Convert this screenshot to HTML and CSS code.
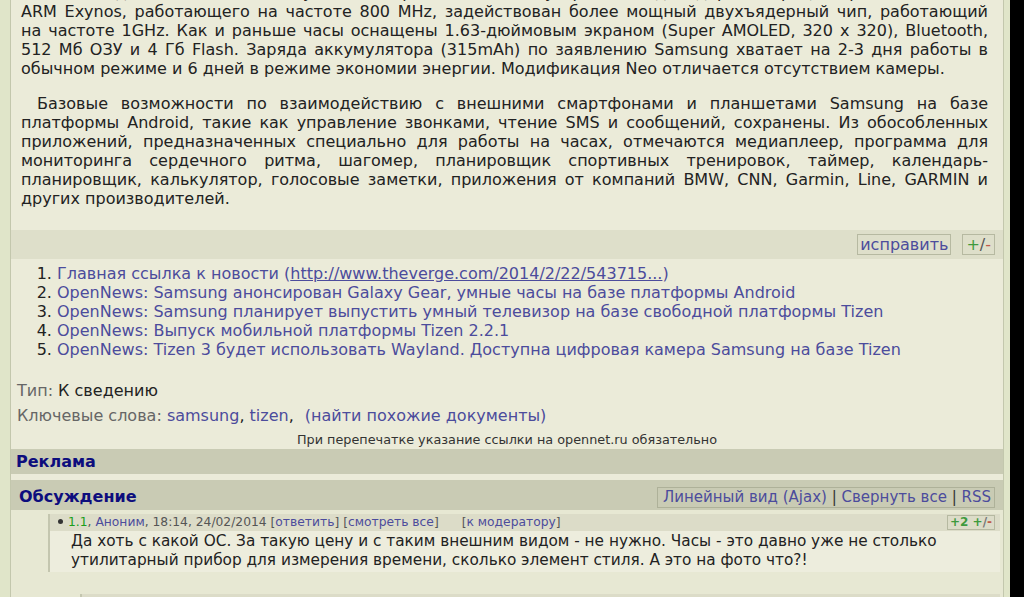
FILE: index.html
```html
<!DOCTYPE html>
<html lang="ru">
<head>
<meta charset="utf-8">
<title>OpenNews: Samsung Gear 2</title>
<link rel="stylesheet" href="styles.css">
</head>
<body>
<div class="page">
  <div class="article">
    <p>В новых моделях вместо используемого в первом поколении устройства одноядерного процессора<br>ARM Exynos, работающего на частоте 800 MHz, задействован более мощный двухъядерный чип, работающий на&nbsp;частоте 1GHz. Как и раньше часы оснащены 1.63-дюймовым экраном (Super AMOLED, 320 x 320), Bluetooth, 512&nbsp;Мб ОЗУ и 4 Гб Flash. Заряда аккумулятора (315mAh) по заявлению Samsung хватает на 2-3 дня работы в обычном режиме и 6 дней в режиме экономии энергии. Модификация Neo отличается отсутствием камеры.</p>
    <p class="p2">Базовые возможности по взаимодействию с внешними смартфонами и планшетами Samsung на базе платформы Android, такие как управление звонками, чтение SMS и сообщений, сохранены. Из обособленных приложений, предназначенных специально для работы на часах, отмечаются медиаплеер, программа для мониторинга сердечного ритма, шагомер, планировщик спортивных тренировок, таймер, календарь-планировщик, калькулятор, голосовые заметки, приложения от компаний BMW, CNN, Garmin, Line, GARMIN и других производителей.</p>
  </div>

  <div class="edit-bar">
    <a class="btn" href="#">исправить</a>
    <a class="btn btn-pm" href="#"><span class="plus">+</span>/<span class="minus">-</span></a>
  </div>

  <ol class="links">
    <li><a href="#">Главная ссылка к новости (<span class="u">http://www.theverge.com/2014/2/22/543715...</span>)</a></li>
    <li><a href="#">OpenNews: Samsung анонсирован Galaxy Gear, умные часы на базе платформы Android</a></li>
    <li><a href="#">OpenNews: Samsung планирует выпустить умный телевизор на базе свободной платформы Tizen</a></li>
    <li><a href="#">OpenNews: Выпуск мобильной платформы Tizen 2.2.1</a></li>
    <li><a href="#">OpenNews: Tizen 3 будет использовать Wayland.</a> <a href="#">Доступна цифровая камера Samsung на базе Tizen</a></li>
  </ol>

  <div class="meta type"><span class="label">Тип:</span> К сведению</div>
  <div class="meta kw"><span class="label">Ключевые слова:</span> <a href="#">samsung</a>, <a href="#">tizen</a>, <a class="similar" href="#">(найти похожие документы)</a></div>
  <div class="reprint">При перепечатке указание ссылки на opennet.ru обязательно</div>

  <div class="ad-bar">Реклама</div>

  <div class="disc-bar">
    <span class="disc-title">Обсуждение</span>
    <span class="view-box"><a href="#">Линейный вид (Ajax)</a> | <a href="#">Свернуть все</a> | <a href="#">RSS</a></span>
  </div>

  <div class="comments">
    <div class="comment">
      <div class="c-head">
        <span class="c-meta"><span class="bullet"></span><span class="num">1.1</span>, <a href="#">Аноним</a>, 18:14, 24/02/2014 [<a href="#">ответить</a>] [<a href="#">смотреть все</a>] <span class="mod">[<a href="#">к модератору</a>]</span></span>
        <span class="vote"><span class="plus">+2</span> <span class="plus">+</span>/<span class="minus">-</span></span>
      </div>
      <div class="c-body">Да хоть с какой ОС. За такую цену и с таким внешним видом - не нужно. Часы - это давно уже не столько утилитарный прибор для измерения времени, сколько элемент стиля. А это на фото что?!</div>
    </div>
    <div class="comment nested">
      <div class="c-head"></div>
    </div>
  </div>
</div>
<div class="gutter"></div>
<div class="scroll"></div>
</body>
</html>
```

FILE: styles.css
```css
* { box-sizing: border-box; }

html, body {
  margin: 0;
  height: 597px;
  overflow: hidden;
}

body {
  display: flex;
  padding-left: 10px;
  background: #e0e5c9;
  font-family: "DejaVu Sans", "Noto Sans", sans-serif;
  font-size: 16px;
  color: #222;
}

a {
  color: #4c4c9c;
  text-decoration: none;
}

.page {
  flex: none;
  width: 994px;
  border-left: 1px solid #c3c7ad;
  border-right: 1px solid #c3c7ad;
  background: #ebebd9;
}

.gutter {
  flex: none;
  width: 6px;
}

.scroll {
  flex: 1;
  background: #000;
}

/* article */
.article {
  margin-top: -17px;
  padding: 0 15px 22px 10px;
  text-align: justify;
  line-height: 19px;
}

.article p {
  margin: 0 0 16px;
}

.article .p2 {
  text-indent: 16px;
  margin-bottom: 0;
}

/* edit bar */
.edit-bar {
  height: 29px;
  background: #dedfca;
  display: flex;
  justify-content: flex-end;
  align-items: center;
  gap: 11px;
  padding-right: 8px;
}

.btn {
  border: 1px solid #b6b9a1;
  line-height: 19px;
  padding: 0 2px;
}

.btn-pm {
  padding: 0 3px;
  color: #555;
}

.plus { color: #3d9a3d; }
.minus { color: #c05a4a; }

/* links list */
.links {
  margin: 5px 0 0;
  padding-left: 46px;
  line-height: 19px;
}

.u { text-decoration: underline; }

/* meta */
.meta {
  padding-left: 6px;
  line-height: 19px;
}

.type { margin-top: 22px; }
.kw { margin-top: 6px; }

.label { color: #666; }

.similar { margin-left: 6px; }

.reprint {
  margin-top: 8px;
  font-size: 12.8px;
  line-height: 14px;
  text-align: center;
  color: #333;
}

/* section bars */
.ad-bar {
  margin-top: 2px;
  height: 25px;
  line-height: 25px;
  padding-left: 5px;
  background: #c9cbb4;
  font-weight: bold;
  color: #0d0d7d;
}

.disc-bar {
  margin-top: 6px;
  height: 30px;
  background: #c9cbb4;
  display: flex;
  justify-content: space-between;
  align-items: flex-end;
  padding: 0 8px;
}

.disc-title {
  align-self: stretch;
  padding-top: 4px;
  line-height: 26px;
  font-weight: bold;
  color: #0d0d7d;
}

.view-box {
  border: 1px solid #aeb199;
  font-size: 15px;
  line-height: 19px;
  padding: 0 3px 0 5px;
  margin-bottom: 2px;
  color: #333;
}

/* comments */
.comments {
  background: #e7e8d3;
  padding: 4px 3px 0 37px;
  height: 100%;
}

.comment {
  border-left: 2px solid #c4c6af;
  background: #ededdd;
}

.comment.nested {
  margin: 22px 0 0 32px;
}

.c-head {
  display: flex;
  justify-content: space-between;
  align-items: center;
  height: 17px;
  padding: 0 5px 0 8px;
  background: #dcdcc8;
  font-size: 12.3px;
  line-height: 17px;
  color: #555;
}

.bullet {
  display: inline-block;
  width: 5px;
  height: 5px;
  border-radius: 50%;
  background: #333;
  margin-right: 5px;
  vertical-align: 2px;
}

.num { color: #1a9e1a; }

.mod { margin-left: 19px; }

.vote {
  border: 1px solid #b6b9a1;
  font-size: 12px;
  line-height: 13px;
  padding: 0 2px;
  font-weight: bold;
  color: #777;
}

.c-body {
  padding: 1px 5px 2px 21px;
  font-size: 15.3px;
  line-height: 19px;
}
```
